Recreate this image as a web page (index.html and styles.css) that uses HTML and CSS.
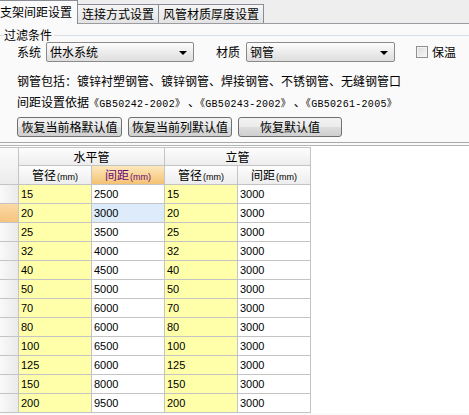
FILE: index.html
```html
<!DOCTYPE html>
<html>
<head>
<meta charset="utf-8">
<link rel="stylesheet" href="styles.css">
</head>
<body>
<div class="tabs">
  <div class="tab active">支架间距设置</div>
  <div class="tab">连接方式设置</div>
  <div class="tab">风管材质厚度设置</div>
</div>
<div class="panel">
  <div class="legend"><span class="legend-text">过滤条件</span></div>
  <div class="filters">
    <span class="lbl">系统</span>
    <div class="combo c1"><span>供水系统</span><i class="arrow"></i></div>
    <span class="lbl l2">材质</span>
    <div class="combo c2"><span>钢管</span><i class="arrow"></i></div>
    <span class="check"></span><span class="lbl l3">保温</span>
  </div>
  <p class="info first">钢管包括：镀锌衬塑钢管、镀锌钢管、焊接钢管、不锈钢管、无缝钢管口</p>
  <p class="info">间距设置依据<span class="std">《GB50242-2002》</span> 、<span class="std">《GB50243-2002》</span> 、<span class="std">《GB50261-2005》</span></p>
  <div class="buttons">
    <button class="btn b1">恢复当前格默认值</button>
    <button class="btn b2">恢复当前列默认值</button>
    <button class="btn b3">恢复默认值</button>
  </div>
</div>
<div class="sep"></div>
<div class="table-area">
  <div class="grid">
    <div class="ind ind-head"></div>
    <div class="hd band">水平管</div>
    <div class="hd band">立管</div>
    <div class="hd">管径<small>(mm)</small></div>
    <div class="hd focus">间距<small>(mm)</small></div>
    <div class="hd">管径<small>(mm)</small></div>
    <div class="hd">间距<small>(mm)</small></div>

    <div class="ind"></div><div class="c y">15</div><div class="c">2500</div><div class="c y">15</div><div class="c">3000</div>
    <div class="ind sel"></div><div class="c y">20</div><div class="c cur">3000</div><div class="c y">20</div><div class="c">3000</div>
    <div class="ind"></div><div class="c y">25</div><div class="c">3500</div><div class="c y">25</div><div class="c">3000</div>
    <div class="ind"></div><div class="c y">32</div><div class="c">4000</div><div class="c y">32</div><div class="c">3000</div>
    <div class="ind"></div><div class="c y">40</div><div class="c">4500</div><div class="c y">40</div><div class="c">3000</div>
    <div class="ind"></div><div class="c y">50</div><div class="c">5000</div><div class="c y">50</div><div class="c">3000</div>
    <div class="ind"></div><div class="c y">70</div><div class="c">6000</div><div class="c y">70</div><div class="c">3000</div>
    <div class="ind"></div><div class="c y">80</div><div class="c">6000</div><div class="c y">80</div><div class="c">3000</div>
    <div class="ind"></div><div class="c y">100</div><div class="c">6500</div><div class="c y">100</div><div class="c">3000</div>
    <div class="ind"></div><div class="c y">125</div><div class="c">6000</div><div class="c y">125</div><div class="c">3000</div>
    <div class="ind"></div><div class="c y">150</div><div class="c">8000</div><div class="c y">150</div><div class="c">3000</div>
    <div class="ind"></div><div class="c y">200</div><div class="c">9500</div><div class="c y">200</div><div class="c">3000</div>
  </div>
</div>
</body>
</html>
```

FILE: styles.css
```css
html, body {
  margin: 0;
  padding: 0;
}
body {
  width: 469px;
  height: 415px;
  overflow: hidden;
  background: #fafafa;
  font-family: "Noto Sans CJK SC", "Liberation Sans", sans-serif;
  font-size: 12px;
  color: #000;
}

/* tabs */
.tabs {
  display: flex;
  align-items: flex-end;
  height: 23px;
  background: #eeeeee;
  border-bottom: 1px solid #9a9ca2;
}
.tab {
  box-sizing: border-box;
  height: 19px;
  line-height: 17px;
  padding: 0 4px 0 4px;
  border: 1px solid #898c95;
  border-bottom: none;
  margin-right: -1px;
  background: linear-gradient(#f5f5f5, #e3e3e3);
}
.tab.active {
  padding: 0 5px 0 0;
  border-left: none;
  background: #fafafa;
  margin-bottom: -1px;
  height: 24px;
  line-height: 22px;
  position: relative;
}

/* filter group */
.legend {
  display: flex;
  align-items: center;
  margin-top: 4px;
  height: 14px;
  line-height: 14px;
}
.legend::before {
  content: "";
  width: 4px;
  border-top: 1px solid #d5dfe5;
}
.legend::after {
  content: "";
  flex: 1;
  border-top: 1px solid #d5dfe5;
  margin-left: 2px;
}
.filters {
  display: flex;
  align-items: center;
  height: 20px;
  padding-left: 17px;
}
.lbl {
  line-height: 14px;
}
.combo {
  box-sizing: border-box;
  height: 20px;
  margin-left: 5px;
  border: 1px solid #8a8a8a;
  border-radius: 2px;
  background: linear-gradient(#fdfdfd, #ececec 50%, #dedede);
  display: flex;
  align-items: center;
  justify-content: space-between;
  padding: 0 6px 0 3px;
  line-height: 16px;
}
.c1 { width: 148px; }
.c2 { width: 149px; margin-left: 6px; }
.l2 { margin-left: 22px; }
.arrow {
  width: 0;
  height: 0;
  border-left: 4px solid transparent;
  border-right: 4px solid transparent;
  border-top: 4px solid #000;
  margin-top: 2px;
}
.check {
  box-sizing: border-box;
  width: 12px;
  height: 12px;
  margin-left: 21px;
  border: 1px solid #8f8f8f;
  background: linear-gradient(135deg, #dcdcdc, #f8f8f8);
  box-shadow: inset 0 0 0 1px #f4f4f4;
}
.l3 { margin-left: 4px; }

.info {
  margin: 0;
  padding-left: 17px;
  height: 21px;
  line-height: 21px;
  white-space: nowrap;
}
.info.first { margin-top: 8px; }
.std {
  font-family: "Liberation Mono", "Noto Sans CJK SC", monospace;
  font-size: 10px;
  letter-spacing: 0.3px;
}

.buttons {
  display: flex;
  gap: 6px;
  padding-left: 17px;
  margin-top: 5px;
}
.btn {
  box-sizing: border-box;
  height: 20px;
  padding: 0;
  border: 1px solid #707070;
  border-radius: 3px;
  background: linear-gradient(#f3f3f3, #ebebeb 50%, #dddddd 51%, #cfcfcf);
  font-family: "Noto Sans CJK SC", sans-serif;
  font-size: 12px;
  line-height: 16px;
  color: #000;
  text-align: center;
}
.b1 { width: 105px; }
.b2 { width: 104px; }
.b3 { width: 104px; }

.sep {
  margin-top: 5px;
  height: 2px;
  border-top: 1px solid #a8a8a8;
  border-bottom: 1px solid #b4b4b4;
}

/* grid */
.table-area {
  background: #fff;
  padding-top: 1px;
}
.grid {
  display: grid;
  grid-template-columns: 19px repeat(4, 73px);
  grid-template-rows: 18px 19px;
  grid-auto-rows: 19px;
  width: 311px;
  border-top: 1px solid #c4c4c4;
}
.grid > div {
  box-sizing: border-box;
  border-right: 1px solid #c4c4c4;
  border-bottom: 1px solid #c4c4c4;
  white-space: nowrap;
  overflow: hidden;
}
.ind {
  background: linear-gradient(90deg, #f9f9f9, #eaeaea);
}
.ind-head {
  grid-row: span 2;
  background: linear-gradient(#fbfbfb, #ececec);
}
.ind.sel {
  background: linear-gradient(#fcd9a6, #f6c47e);
}
.hd {
  background: linear-gradient(#fdfdfd, #ededed);
  text-align: center;
  line-height: 18px;
}
.hd.band {
  grid-column: span 2;
  line-height: 17px;
}
.hd small {
  font-family: "Liberation Sans", sans-serif;
  font-size: 9px;
  margin-left: 1px;
}
.hd.focus {
  background: linear-gradient(#fde8bc, #f4c274);
  color: #6a0a7a;
}
.c {
  font-family: "Liberation Sans", "DejaVu Sans", sans-serif;
  font-size: 11px;
  line-height: 18px;
  padding-left: 2px;
  background: #fff;
}
.c.y { background: #ffffaa; }
.c.cur { background: #ddebfb; }
```
